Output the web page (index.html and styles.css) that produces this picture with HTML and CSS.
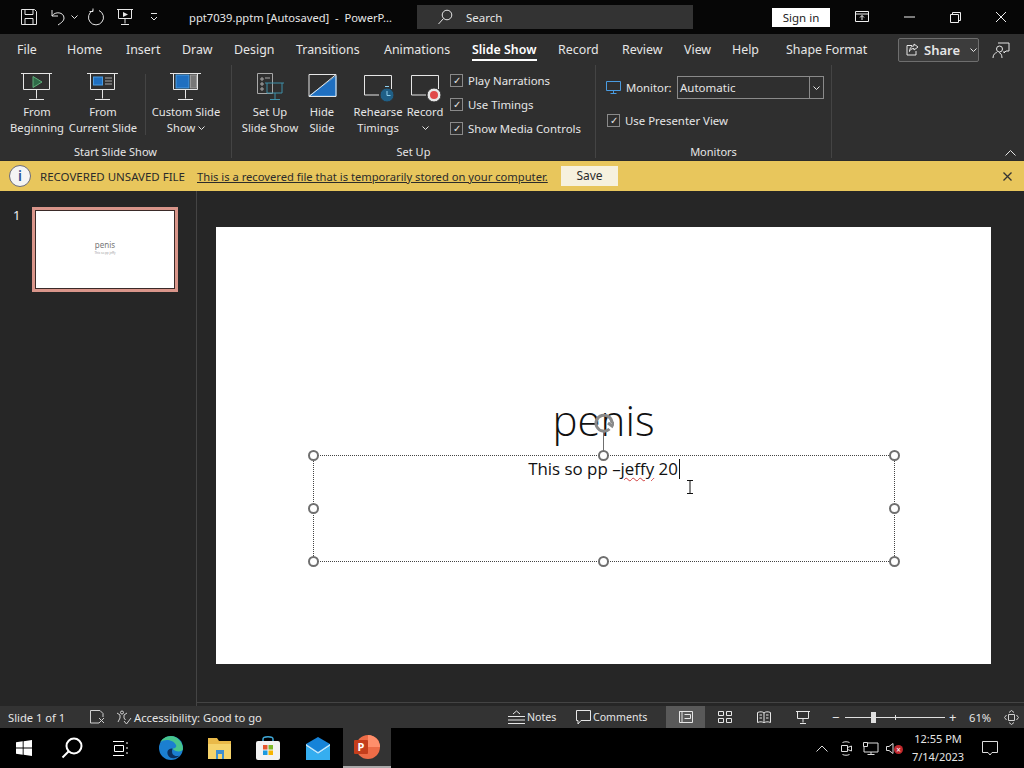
FILE: index.html
```html
<!doctype html>
<html lang="en">

<head>
    <meta charset="utf-8">
    <title>ppt7039.pptm</title>
    <link rel="stylesheet" href="styles.css">
</head>

<body>
    <div class="titlebar">
        <svg class="qat save" width="18" height="18" viewBox="0 0 18 18"><path d="M1.500 1.500h13l2 2v13h-15zM5 1.500v5h8v-5M5 16.500v-6h8v6" /></svg>
        <svg class="qat undo" width="16" height="18" viewBox="0 0 16 18"><path d="M2 2v6h6M2 8c3-5 12-4 12 2 0 3-3 5-6 7" /></svg>
        <svg class="chev qat-caret" width="7" height="4" viewBox="0 0 7 4"><path d="M.5.500l3 3 3-3" /></svg>
        <svg class="qat redo" width="18" height="18" viewBox="0 0 18 18"><path d="M6 2.500a7.500 7.500 0 1 0 6 0M6 .5v3H2.500" /></svg>
        <svg class="qat present" width="16" height="18" viewBox="0 0 16 18"><path d="M0 1.500h16M1.500 1.500v9h13v-9M8 10.500v5M4 16.500h8" /><path class="fill" d="M6 4l5 2.500L6 9z" /></svg>
        <svg class="qat more" width="10" height="10" viewBox="0 0 10 10"><path d="M2 1.500h6M2 5l3 3 3-3" /></svg>
        <div class="doc-title">ppt7039.pptm [Autosaved] &nbsp;-&nbsp; PowerP...</div>
        <div class="search">
            <svg width="16" height="16" viewBox="0 0 16 16"><circle cx="10" cy="6" r="4.800" /><path d="M6.500 9.500L1.500 15" /></svg>
            <span>Search</span>
        </div>
        <div class="signin">Sign in</div>
        <svg class="win ribbon-mode" width="14" height="12" viewBox="0 0 14 12"><path d="M.5.500h13v10H.5zM.5 3h13M7 9V4.500M5 6.500l2-2 2 2" /></svg>
        <svg class="win minimize" width="11" height="2" viewBox="0 0 11 2"><path d="M0 1h11" /></svg>
        <svg class="win restore" width="11" height="11" viewBox="0 0 11 11"><path d="M.5 2.500h8v8h-8zM2.500 2.500V.5h8v8h-2" /></svg>
        <svg class="win close" width="12" height="12" viewBox="0 0 12 12"><path d="M1 1l10 10M11 1L1 11" /></svg>
    </div>

    <div class="tabs">
        <span class="tab t-file">File</span>
        <span class="tab t-home">Home</span>
        <span class="tab t-insert">Insert</span>
        <span class="tab t-draw">Draw</span>
        <span class="tab t-design">Design</span>
        <span class="tab t-trans">Transitions</span>
        <span class="tab t-anim">Animations</span>
        <span class="tab t-show active">Slide Show</span>
        <span class="tab t-record">Record</span>
        <span class="tab t-review">Review</span>
        <span class="tab t-view">View</span>
        <span class="tab t-help">Help</span>
        <span class="tab t-shape">Shape Format</span>
        <div class="share">
            <svg width="13" height="13" viewBox="0 0 13 13"><path d="M8 1l4 3-4 3V5.500C5 5.500 4 7 3.500 8.500 3.500 5.500 5 3 8 2.800zM6 2.500H1v9.500h9V8" /></svg>
            <b>Share</b>
            <svg class="chev share-caret" width="7" height="4" viewBox="0 0 7 4"><path d="M.5.500l3 3 3-3" /></svg>
        </div>
        <svg class="comment-icon" width="18" height="18" viewBox="0 0 18 18"><path d="M6 2h11v8h-3l-2 2v-2M7.500 5a3 3 0 1 1-3 3 3 3 0 0 1 3-3M1 17c0-3.500 2-5 3.800-5.500M7 11.500c1.500.5 3 2 3 5.500" /></svg>
    </div>

    <div class="ribbon">
        <div class="group g-start">
            <div class="group-items">
                <div class="rbtn w-begin">
                    <svg width="32" height="30" viewBox="0 0 32 30"><path d="M0 1.500h31M2.500 1.500v16h26v-16M15.500 17.500v9M8 27.500h15" /><path class="play" d="M12 4.500l9 5.500-9 5.500z" /></svg>
                    <span>From<br>Beginning</span>
                </div>
                <div class="rbtn w-current">
                    <svg width="32" height="30" viewBox="0 0 32 30"><path d="M0 1.500h31M3.500 1.500v16h24v-16M15.500 17.500v9M8 27.500h15" /><rect class="blue" x="6.500" y="5" width="9" height="8" /><path class="dim" d="M18 6h7M18 9h7M18 12h7" /></svg>
                    <span>From<br>Current Slide</span>
                </div>
                <i class="vsep short"></i>
                <div class="rbtn w-custom">
                    <svg width="32" height="30" viewBox="0 0 32 30"><path d="M0 1.500h31M3.500 1.500v16h24v-16M15.500 17.500v9M8 27.500h15" /><rect class="blue" x="6" y="3" width="13" height="13" /><rect class="grey" x="20.500" y="3" width="6" height="13" /></svg>
                    <span>Custom Slide<br>Show <svg class="chev" width="7" height="4" viewBox="0 0 7 4"><path d="M.5.500l3 3 3-3" /></svg></span>
                </div>
            </div>
            <div class="group-label">Start Slide Show</div>
        </div>
        <div class="group g-setup">
            <div class="group-items">
                <div class="rbtn w-setup">
                    <svg width="32" height="30" viewBox="-2 0 32 30"><path class="dim" d="M1.500 1.500h15v20h-15zM5 6h2v2H5zM5 11h2v2H5zM5 16h2v2H5zM9 6h5" /><path class="teal" d="M9 11h19M11 11v10h15V11M19 21v6M14 27.500h10" /></svg>
                    <span>Set Up<br>Slide Show</span>
                </div>
                <div class="rbtn w-hide">
                    <svg width="32" height="30" viewBox="-2 0 32 30"><path class="blue" d="M1 24L28 4v20z" /><path d="M1 2.500h27v22H1zM1 24.500L28 2.500" /></svg>
                    <span>Hide<br>Slide</span>
                </div>
                <div class="rbtn w-rehearse">
                    <svg width="32" height="30" viewBox="-2 -2 32 30"><path d="M15 21H.5V1.500h27V15" /><circle class="teal-fill" cx="23" cy="21" r="7" /><path class="stem" d="M23 17v4.500h3.500M21 12.500h4" /></svg>
                    <span>Rehearse<br>Timings</span>
                </div>
                <div class="rbtn w-record">
                    <svg width="32" height="30" viewBox="-2 -2 32 30"><path d="M15 21H.5V1.500h27V15" /><circle class="ring" cx="23" cy="21" r="7" /><circle class="red" cx="23" cy="21" r="4" /></svg>
                    <span>Record<br><svg class="chev" width="7" height="4" viewBox="0 0 7 4"><path d="M.5.500l3 3 3-3" /></svg></span>
                </div>
                <div class="checks">
                    <label class="check"><i class="box">&#10003;</i>Play Narrations</label>
                    <label class="check"><i class="box">&#10003;</i>Use Timings</label>
                    <label class="check"><i class="box">&#10003;</i>Show Media Controls</label>
                </div>
            </div>
            <div class="group-label">Set Up</div>
        </div>
        <div class="group g-monitors">
            <div class="monitor-row">
                <svg class="monitor-icon" width="15" height="13" viewBox="0 0 15 13"><path d="M.5.500h14v9H.5zM7.500 9.500v3M4.500 12.500h6" /></svg>
                <span class="monitor-label">Monitor:</span>
                <div class="select"><span>Automatic</span><i><svg class="chev" width="7" height="4" viewBox="0 0 7 4"><path d="M.5.500l3 3 3-3" /></svg></i></div>
            </div>
            <label class="check presenter"><i class="box">&#10003;</i>Use Presenter View</label>
            <div class="group-label">Monitors</div>
        </div>
        <svg class="collapse" width="11" height="6" viewBox="0 0 11 6"><path d="M.5 5.500l5-5 5 5" /></svg>
    </div>

    <div class="banner">
        <span class="info">i</span>
        <span class="banner-title">RECOVERED UNSAVED FILE</span>
        <span class="banner-msg">This is a recovered file that is temporarily stored on your computer.</span>
        <span class="banner-save">Save</span>
        <svg class="banner-close" width="9" height="9" viewBox="0 0 9 9"><path d="M.5.500l8 8M8.500.5l-8 8" /></svg>
    </div>

    <div class="main">
        <div class="thumbs">
            <span class="thumb-num">1</span>
            <div class="thumb">
                <span class="thumb-title">penis</span>
                <span class="thumb-sub">This so pp jeffy</span>
            </div>
        </div>
        <div class="canvas">
            <div class="slide">
                <div class="title-text">penis</div>
                <div class="textbox">
                    <span class="body-text">This so pp &ndash;<span class="squiggle">jeffy</span> 20<i class="caret"></i></span>
                    <i class="handle h-tl"></i><i class="handle h-tc"></i><i class="handle h-tr"></i>
                    <i class="handle h-ml"></i><i class="handle h-mr"></i>
                    <i class="handle h-bl"></i><i class="handle h-bc"></i><i class="handle h-br"></i>
                    <i class="rot-line"></i>
                    <svg class="rot" width="20" height="20" viewBox="0 0 20 20"><path d="M15.500 16A8 8 0 1 1 18 10" /><path d="M14 10l4 3 2-4" /></svg>
                </div>
                <svg class="ibeam" width="8" height="14" viewBox="0 0 8 14"><path d="M1 .5h6M1 13.500h6M4 .5v13" /></svg>
            </div>
        </div>
    </div>

    <div class="status">
        <span class="st-slide">Slide 1 of 1</span>
        <svg class="st-spell" width="15" height="14" viewBox="0 0 15 14"><path d="M9 13H.5V.5H10l3 3V7M9 8l5 5M14 8l-5 5" /></svg>
        <svg class="st-acc" width="16" height="15" viewBox="0 0 16 15"><circle cx="6" cy="2.500" r="1.500" /><path d="M1 3l3 2v3l-2 4M11 3L8 5v3l1.500 2M8 11l2.500 3L15 8" /></svg>
        <span class="st-acc-text">Accessibility: Good to go</span>
        <svg class="st-notes" width="17" height="15" viewBox="0 0 17 15"><path d="M5 4l3.500-3L12 4M0 6.500h17M0 10h17M0 13.500h17" /></svg>
        <span class="st-text">Notes</span>
        <svg class="st-comments" width="15" height="15" viewBox="0 0 15 15"><path d="M.5.500h14v10H5l-3 3.500v-3.500H.5z" /></svg>
        <span class="st-text">Comments</span>
        <div class="view on"><svg width="14" height="12" viewBox="0 0 14 12"><path d="M.5.500h13v11H.5zM.5.500h2.500v11M5.500 3.500h6v4h-6" /></svg></div>
        <div class="view"><svg width="14" height="12" viewBox="0 0 14 12"><path d="M.5.500h5v4h-5zM8.500.5h5v4h-5zM.5 7.500h5v4h-5zM8.500 7.500h5v4h-5z" /></svg></div>
        <div class="view"><svg width="14" height="12" viewBox="0 0 14 12"><path d="M.5 1.500C3 .5 5.500.5 7 2c1.500-1.500 4-1.500 6.500-.5v10C11 10.500 8.500 10.500 7 12c-1.500-1.500-4-1.500-6.500-.5zM7 2v10M2.500 4h2.500M2.500 7h2.500M9 4h2.500M9 7h2.500" /></svg></div>
        <div class="view"><svg width="14" height="13" viewBox="0 0 14 13"><path d="M0 .5h14M1.500.5v7h11v-7M7 7.500v4M4 12.500h6" /></svg></div>
        <span class="zoom-btn zm">&minus;</span>
        <div class="slider"><i class="tick"></i><i class="knob"></i></div>
        <span class="zoom-btn zp">+</span>
        <span class="pct">61%</span>
        <svg class="fit" width="15" height="15" viewBox="0 0 15 15"><path d="M4.500 4.500h6v6h-6zM5 2.500L7.500.5 10 2.500M5 12.500l2.500 2 2.500-2M2.500 5L.5 7.500l2 2.500M12.500 5l2 2.500-2 2.500" /></svg>
    </div>

    <div class="taskbar">
        <svg class="tb-start" width="16" height="16" viewBox="0 0 16 16"><path d="M0 2.300l6.700-1v6.200H0zM7.600 1.200L16 0v7.500H7.600zM0 8.400h6.700v6.300L0 13.700zM7.600 8.400H16V16l-8.400-1.200z" /></svg>
        <svg class="tb-search" width="22" height="22" viewBox="0 0 22 22"><circle cx="13" cy="9" r="7.500" /><path d="M7.500 14.500L1.500 20.500" /></svg>
        <svg class="tb-tasks" width="17" height="15" viewBox="0 0 17 15"><path d="M0 .5h11M0 14.500h11M1.500 4.500h9v6h-9zM14 1v2M14 6v2M14 11v2" /></svg>
        <svg class="tb-app edge" width="24" height="24" viewBox="0 0 24 24"><circle cx="12" cy="12" r="12" fill="#1b7fd0" /><path d="M24 13C24 6 18 0 12 0 7 0 3 3 1.500 6 5 3 14 3 17 9c1 2-1 3.500-3.500 3.500 2 3.500 10 4 10.500.5z" fill="#47c58c" /><path d="M13.500 12.500C9 12 7 16 9.500 20c2 3 8 3 11-.5-4 1.500-9 0-7-7z" fill="#0c2f5c" /></svg>
        <svg class="tb-app folder" width="23" height="21" viewBox="0 0 23 21"><path d="M0 0h9l2 3h12v18H0z" fill="#e9b949" /><path d="M0 6h23v15H0z" fill="#f5d36b" /><path d="M8 12h8v9h-2v-5h-4v5H8z" fill="#3f8fd0" /></svg>
        <svg class="tb-app store" width="24" height="24" viewBox="0 0 24 24"><path d="M7 6V3c0-3 10-3 10 0v3" fill="none" stroke="#3fa7d6" stroke-width="1.500" /><rect y="5" width="24" height="19" rx="2" fill="#f2f2f2" /><rect x="7" y="9" width="4.500" height="4.500" fill="#e5572f" /><rect x="12.500" y="9" width="4.500" height="4.500" fill="#7db928" /><rect x="7" y="14.500" width="4.500" height="4.500" fill="#1a9ae0" /><rect x="12.500" y="14.500" width="4.500" height="4.500" fill="#f7b500" /></svg>
        <svg class="tb-app mail" width="24" height="23" viewBox="0 0 24 23"><path d="M0 7L12 0l12 7v16H0z" fill="#1683d8" /><path d="M0 7l12 8 12-8v2L12 17 0 9z" fill="#bfe6fb" /><path d="M0 23V9l12 8 12-8v14z" fill="#35aef0" /></svg>
        <div class="tb-ppt">
            <svg width="26" height="24" viewBox="0 0 26 24"><circle cx="14" cy="12" r="12" fill="#ed6c47" /><path d="M14 0a12 12 0 0 1 12 12H14z" fill="#ff8f6b" /><rect y="5" width="14" height="14" rx="1" fill="#c43e1c" /><text x="3.500" y="16" class="ppt-p">P</text></svg>
        </div>
        <svg class="tray t-chevron" width="12" height="7" viewBox="0 0 12 7"><path d="M.5 6.500L6 1l5.500 5.500" /></svg>
        <svg class="tray t-meet" width="11" height="15" viewBox="0 0 11 15"><path d="M1.500 1.500c2-1 5-1 7 0M1.500 13.500c2 1 5 1 7 0M.5 4.500h6v6h-6zM6.500 6.500l4-1.500v5l-4-1.500" /></svg>
        <svg class="tray t-net" width="16" height="13" viewBox="0 0 16 13"><path d="M1 1h14v9H1zM8 10v2.500M4.500 12.500h7" /><path d="M.5 .5h4v4h-4z" class="black" /></svg>
        <div class="t-sound">
            <svg class="tray" width="8" height="11" viewBox="0 0 8 11"><path d="M.5 3.500h2.500l4-3v10l-4-3H.5z" /></svg>
            <i class="muted">&times;</i>
        </div>
        <div class="clock">12:55 PM<br>7/14/2023</div>
        <svg class="tray t-notify" width="16" height="15" viewBox="0 0 16 15"><path d="M.5.500h15v11h-5.500L8 14l-2-2.500H.5z" /></svg>
    </div>
</body>

</html>
```

FILE: styles.css
```css
* {
    box-sizing: border-box;
}

body {
    margin: 0;
    width: 1024px;
    height: 768px;
    overflow: hidden;
    display: flex;
    flex-direction: column;
    background-color: #262626;
    color: #e6e6e6;
    font-family: "Noto Sans", "Open Sans", sans-serif;
    font-size: 12px;
}

svg {
    flex: none;
    fill: none;
    stroke: #e6e6e6;
    stroke-width: 1;
}

.chev { vertical-align: 2px; }

/* title bar */
.titlebar {
    height: 34px;
    flex: none;
    display: flex;
    align-items: center;
    background-color: #060606;
}

.save { margin-left: 20px; }
.undo { margin-left: 12px; }
.qat-caret { margin-left: 5px; }
.redo { margin-left: 9px; }
.present { margin-left: 12px; }
.more { margin-left: 16px; }
.qat .fill { fill: #e6e6e6; stroke: none; }

.doc-title {
    width: 228px;
    margin-left: 30px;
    font-size: 11.200px;
    white-space: nowrap;
}

.search {
    width: 276px;
    height: 24px;
    display: flex;
    align-items: center;
    gap: 13px;
    padding-left: 20px;
    background-color: #333333;
    font-size: 11.500px;
}

.signin {
    width: 58px;
    height: 19px;
    margin-left: 79px;
    background-color: #ffffff;
    color: #222222;
    text-align: center;
    line-height: 20px;
    font-size: 11.500px;
}

.win { stroke: #eeeeee; }
.ribbon-mode { margin-left: 25px; }
.minimize { margin-left: 35px; }
.restore { margin-left: 35px; }
.close { margin-left: 34px; }

/* tabs */
.tabs {
    height: 31px;
    flex: none;
    display: flex;
    align-items: center;
    background-color: #2f2f2f;
    font-size: 12.400px;
}

.tab {
    flex: none;
    height: 31px;
    line-height: 31px;
    white-space: nowrap;
}

.t-file { margin-left: 17px; width: 50px; }
.t-home { width: 59px; }
.t-insert { width: 56px; }
.t-draw { width: 52px; }
.t-design { width: 62px; }
.t-trans { width: 88px; }
.t-anim { width: 88px; }
.t-show { width: 65px; margin-right: 21px; }
.t-record { width: 64px; }
.t-review { width: 62px; }
.t-view { width: 48px; }
.t-help { width: 54px; }
.t-shape { width: 87px; }

.tab.active {
    color: #ffffff;
    font-weight: 600;
    position: relative;
}

.tab.active::after {
    content: "";
    position: absolute;
    left: 0;
    right: 0;
    bottom: 4px;
    height: 2px;
    background-color: #ffffff;
}

.share {
    width: 81px;
    height: 24px;
    margin-left: 25px;
    display: flex;
    align-items: center;
    gap: 5px;
    padding-left: 7px;
    border: 1px solid #6e6e6e;
    border-radius: 2px;
    background-color: #3c3c3c;
    font-size: 13px;
}

.share b { font-weight: 600; }
.share-caret { margin-left: 5px; }
.comment-icon { margin-left: 13px; }

/* ribbon */
.ribbon {
    height: 96px;
    flex: none;
    position: relative;
    display: flex;
    background-color: #2f2f2f;
    border-bottom: 1px solid #2b2b2b;
}

.group {
    position: relative;
    border-right: 1px solid #444444;
    margin-bottom: 2px;
}

.group-items {
    display: flex;
    height: 75px;
}

.g-start { width: 232px; padding-left: 4px; }
.g-setup { width: 364px; padding-left: 6px; }
.g-monitors { width: 236px; }

.group-label {
    position: absolute;
    left: 0;
    right: 0;
    top: 79px;
    text-align: center;
    font-size: 11px;
    line-height: 16px;
}

.rbtn {
    flex: none;
    display: flex;
    flex-direction: column;
    align-items: center;
    padding-top: 7px;
    text-align: center;
    line-height: 16px;
    white-space: nowrap;
    font-size: 11.200px;
}

.rbtn > svg { margin-bottom: 2px; }

.w-begin { width: 66px; }
.w-current { width: 66px; }
.w-custom { width: 80px; }
.w-setup { width: 64px; }
.w-hide { width: 40px; }
.w-rehearse { width: 52px; margin-left: 10px; }
.w-record { width: 42px; }

.vsep.short {
    width: 1px;
    height: 61px;
    margin: 9px 0 0 9px;
    background-color: #444444;
}

.play { stroke: #5fae7a; fill: #2f6b48; }
.blue { fill: #1f6fc0; stroke: #4a9be0; }
.grey { fill: #777777; stroke: #999999; }
.dim { stroke: #a8a8a8; }
.teal { stroke: #3f8fa8; }
.teal-fill { fill: #1f5f86; stroke: #2f2f2f; }
.stem { stroke: #8fd0ee; }
.ring { fill: #e6e6e6; stroke: #2f2f2f; }
.red { fill: #e04848; stroke: none; }

.checks {
    flex: none;
    margin-left: 4px;
    padding-top: 3px;
}

.check {
    display: flex;
    align-items: center;
    gap: 5px;
    height: 24px;
    font-size: 11.400px;
    white-space: nowrap;
}

.box {
    width: 13px;
    height: 13px;
    border: 1px solid #8a8a8a;
    font-style: normal;
    font-size: 10px;
    line-height: 11px;
    text-align: center;
}

.monitor-row {
    display: flex;
    align-items: center;
    height: 24px;
    margin: 10px 0 0 10px;
}

.monitor-icon { stroke: #4a9be0; }
.monitor-label { width: 46px; margin: 0 5px 0 5px; font-size: 11.300px; white-space: nowrap; }

.select {
    width: 147px;
    height: 23px;
    display: flex;
    border: 1px solid #8a8a8a;
    line-height: 21px;
    font-size: 11.500px;
}

.select span {
    flex: 1;
    padding-left: 2px;
    border-right: 1px solid #8a8a8a;
}

.select i {
    width: 13px;
    font-style: normal;
    text-align: center;
}

.presenter { margin: 9px 0 0 11px; }

.collapse {
    position: absolute;
    right: 8px;
    bottom: 4px;
}

/* recovered banner */
.banner {
    height: 30px;
    flex: none;
    display: flex;
    align-items: center;
    background-color: #e8c65c;
    color: #2b2b2b;
}

.info {
    width: 22px;
    height: 22px;
    margin-left: 9px;
    border: 1px solid #6b6b7a;
    border-radius: 50%;
    background-color: #f4f4f4;
    color: #2f5597;
    text-align: center;
    line-height: 20px;
    font-weight: 600;
    font-size: 14px;
}

.banner-title { margin-left: 9px; width: 157px; font-size: 11.500px; white-space: nowrap; }
.banner-msg { width: 364px; font-size: 11.200px; text-decoration: underline; white-space: nowrap; }

.banner-save {
    width: 57px;
    height: 20px;
    background-color: #f6f1de;
    text-align: center;
    line-height: 20px;
}

.banner-close {
    margin-left: 385px;
    stroke: #333333;
    stroke-width: 1.300;
}

/* slide area */
.main {
    flex: 1;
    display: flex;
    min-height: 0;
}

.thumbs {
    width: 197px;
    flex: none;
    display: flex;
    align-items: flex-start;
    padding: 16px 0 0 13px;
    border-right: 1px solid #444444;
}

.thumb-num { width: 19px; color: #eeeeee; font-size: 13px; line-height: 16px; }

.thumb {
    width: 146px;
    height: 85px;
    display: flex;
    flex-direction: column;
    align-items: center;
    padding-top: 30px;
    background-color: #ffffff;
    border: 3px solid #d9958a;
    outline: 1px solid #3a2a28;
    outline-offset: -4px;
    color: #777777;
}

.thumb-title { font-size: 8px; line-height: 10px; }
.thumb-sub { font-size: 3px; line-height: 6px; color: #999999; }

.canvas {
    flex: 1;
    padding: 36px 0 0 19px;
    border-bottom: 1px solid #444444;
    margin-bottom: 3px;
}

.slide {
    width: 775px;
    height: 437px;
    position: relative;
    background-color: #ffffff;
    color: #111111;
}

.title-text {
    position: absolute;
    left: 0;
    width: 775px;
    top: 163px;
    text-align: center;
    font-family: "Open Sans", sans-serif;
    font-weight: 300;
    font-size: 42px;
    line-height: 60px;
}

.textbox {
    position: absolute;
    left: 97px;
    top: 228px;
    width: 582px;
    height: 107px;
    border: 1px dotted #444444;
    text-align: center;
}

.body-text {
    display: inline-block;
    font-family: "Open Sans", sans-serif;
    font-size: 16.900px;
    line-height: 26px;
}

.squiggle { text-decoration: underline wavy #d04040 1px; text-underline-offset: 2px; }

.caret {
    display: inline-block;
    width: 1px;
    height: 20px;
    margin-left: 1px;
    vertical-align: -4px;
    background-color: #111111;
}

.handle {
    position: absolute;
    width: 11px;
    height: 11px;
    border: 2px solid #6f6f6f;
    border-radius: 50%;
    background-color: #ffffff;
}

.h-tl { left: -6px; top: -6px; }
.h-tc { left: 284px; top: -6px; }
.h-tr { right: -6px; top: -6px; }
.h-ml { left: -6px; top: 47px; }
.h-mr { right: -6px; top: 47px; }
.h-bl { left: -6px; bottom: -6px; }
.h-bc { left: 284px; bottom: -6px; }
.h-br { right: -6px; bottom: -6px; }

.rot-line {
    position: absolute;
    left: 289px;
    top: -24px;
    width: 1px;
    height: 19px;
    background-color: #6f6f6f;
}

.rot {
    position: absolute;
    left: 280px;
    top: -43px;
    stroke: #8a8a8a;
    stroke-width: 3;
}

.ibeam {
    position: absolute;
    left: 470px;
    top: 253px;
    stroke: #111111;
}

/* status bar */
.status {
    height: 22px;
    flex: none;
    display: flex;
    align-items: center;
    background-color: #333333;
    font-size: 11.200px;
}

.st-slide { width: 82px; margin-left: 8px; white-space: nowrap; }
.st-spell { stroke: #d0d0d0; }
.st-acc { margin-left: 11px; stroke: #d0d0d0; }
.st-acc-text { width: 374px; margin-left: 2px; white-space: nowrap; }
.st-text { width: 30px; margin-left: 2px; white-space: nowrap; font-size: 10.600px; }
.st-comments { margin-left: 19px; }
.st-comments + .st-text { width: 54px; }

.view {
    width: 39px;
    height: 22px;
    display: flex;
    align-items: center;
    justify-content: center;
}

.view.on { margin-left: 19px; background-color: #595959; }

.zoom-btn { font-size: 13px; line-height: 20px; }
.zm { margin-left: 10px; width: 13px; }

.slider {
    position: relative;
    width: 100px;
    height: 1px;
    background-color: #e0e0e0;
}

.tick {
    position: absolute;
    left: 50px;
    top: -2px;
    width: 1px;
    height: 5px;
    background-color: #e0e0e0;
}

.knob {
    position: absolute;
    left: 26px;
    top: -5px;
    width: 5px;
    height: 11px;
    background-color: #e0e0e0;
}

.zp { margin-left: 4px; width: 13px; }
.pct { margin-left: 7px; width: 35px; }
.fit { stroke: #d0d0d0; }

/* taskbar */
.taskbar {
    height: 40px;
    flex: none;
    display: flex;
    align-items: center;
    background-color: #000000;
}

.tb-start { margin-left: 16px; stroke: none; fill: #ffffff; }
.tb-search { margin-left: 29px; stroke-width: 2; stroke: #ffffff; }
.tb-tasks { margin-left: 30px; stroke: #ffffff; }
.tb-app { stroke: none; }
.edge { margin-left: 29px; }
.folder { margin-left: 25px; }
.store { margin-left: 25px; }
.mail { margin-left: 26px; }

.tb-ppt {
    width: 48px;
    height: 40px;
    margin-left: 13px;
    display: flex;
    align-items: center;
    justify-content: center;
    background-color: #333333;
    border-bottom: 2px solid #aaaaaa;
}

.tb-ppt svg { stroke: none; }
.ppt-p { fill: #ffffff; font-size: 11px; font-weight: 700; }

.tray { stroke: #dddddd; }
.t-chevron { margin-left: 425px; }
.t-meet { margin-left: 13px; }
.t-net { margin-left: 11px; }
.t-net .black { fill: #000000; }

.t-sound {
    position: relative;
    width: 18px;
    margin-left: 7px;
    display: flex;
    align-items: center;
}

.muted {
    position: absolute;
    left: 8px;
    top: 2px;
    width: 9px;
    height: 9px;
    border-radius: 50%;
    background-color: #c0272d;
    color: #ffffff;
    font-style: normal;
    font-size: 8px;
    line-height: 9px;
    text-align: center;
}

.clock {
    width: 68px;
    text-align: center;
    font-size: 11px;
    line-height: 18px;
}

.t-notify { margin-left: 10px; }
```
